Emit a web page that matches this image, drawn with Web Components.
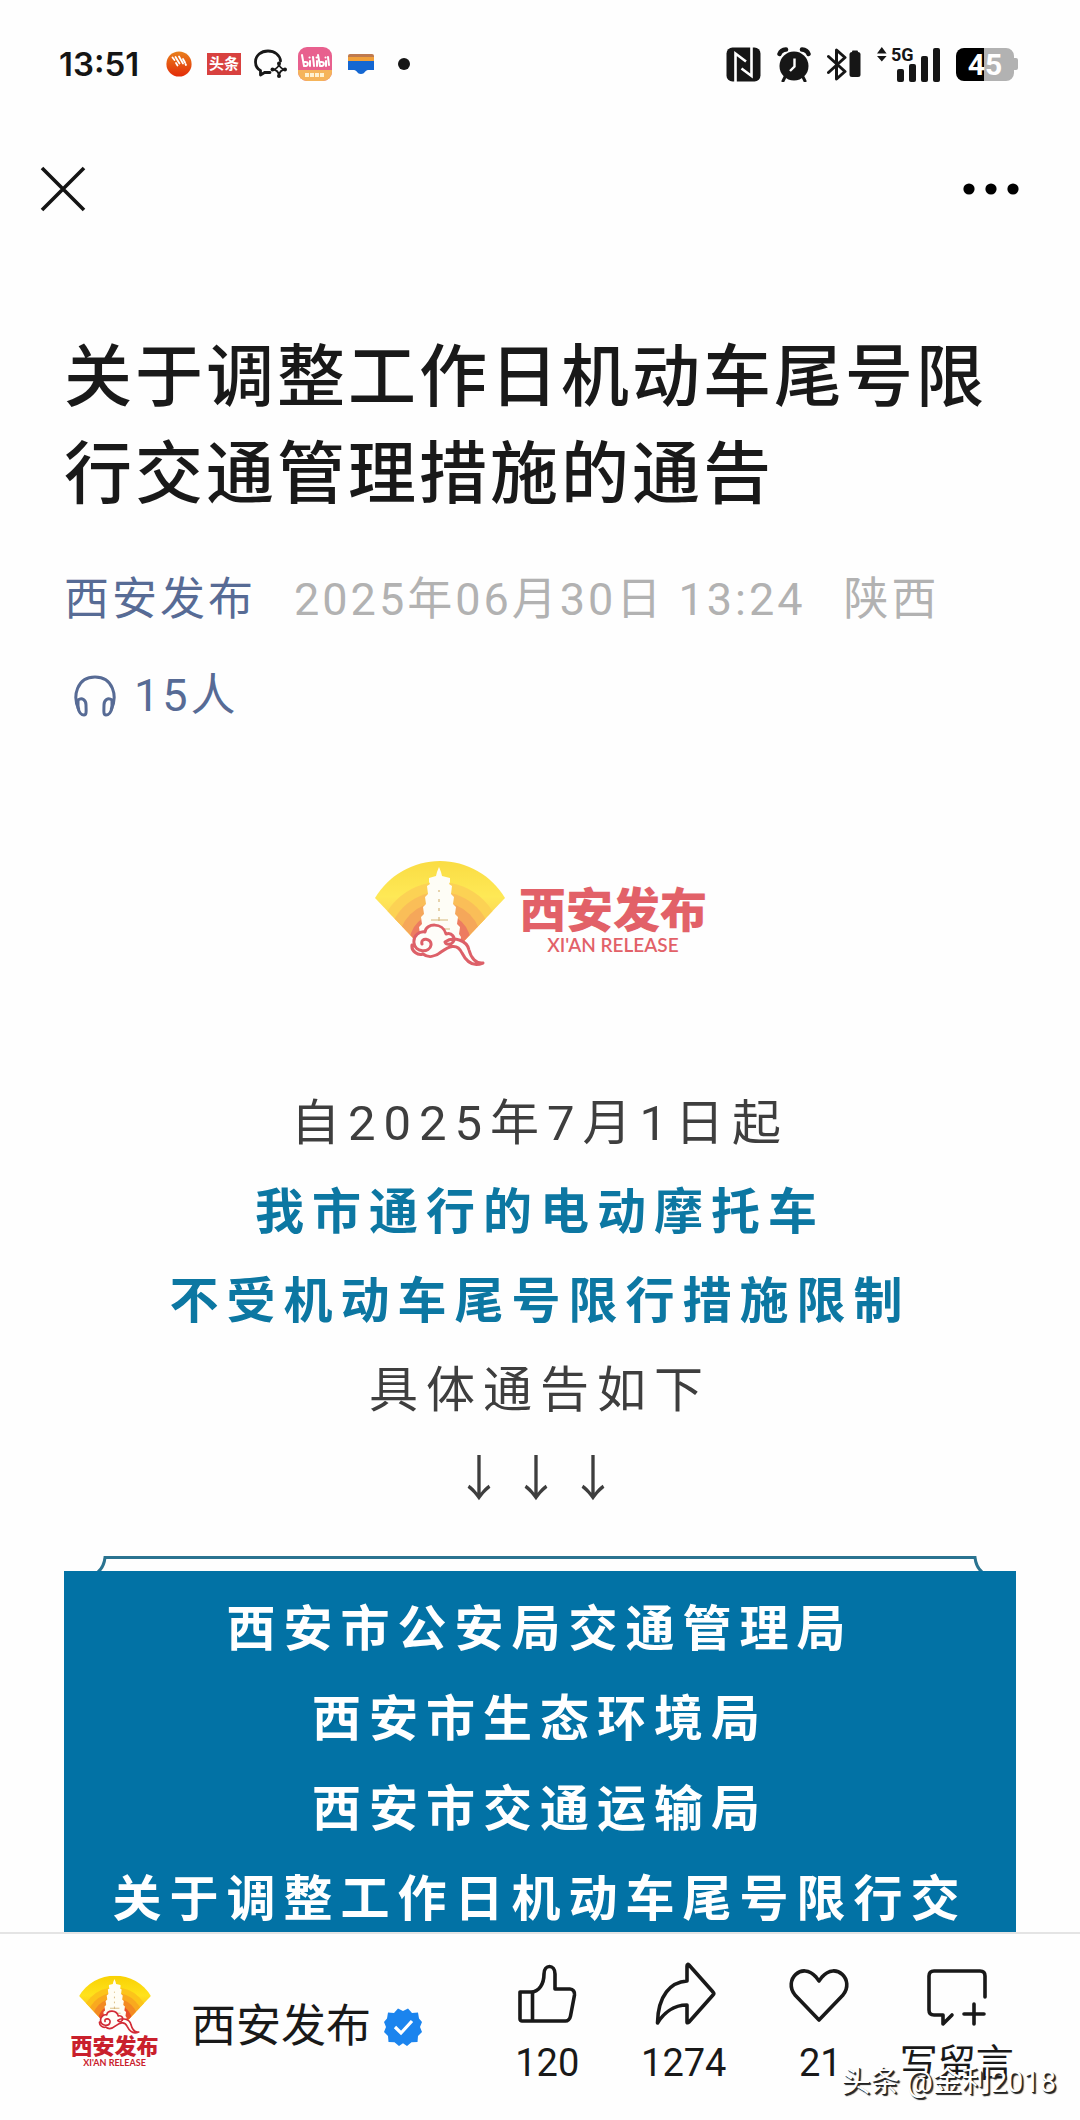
<!DOCTYPE html>
<html lang="zh-CN">
<head>
<meta charset="utf-8">
<meta name="viewport" content="width=device-width">
<title>关于调整工作日机动车尾号限行交通管理措施的通告</title>
<style>
body{margin:0;background:#fefefe;color:#191919;font-family:Roboto,"Noto Sans CJK SC",sans-serif}
</style>
</head>
<body>
<article-page></article-page>
<script>
function define(name, html){
  const t = document.createElement('template');
  t.innerHTML = html;
  customElements.define(name, class extends HTMLElement{
    constructor(){ super(); this.attachShadow({mode:'open'}).appendChild(t.content.cloneNode(true)); }
  });
}

define('status-bar', `
<style>
:host{display:flex;align-items:center;justify-content:space-between;height:128px;padding:0 62px 0 59px;box-sizing:border-box}
.side{display:flex;align-items:center}
.time{font:600 33px/40px Inter,sans-serif;color:#151515;width:107px;white-space:nowrap}
svg{display:block;flex:none}
.tt{background:#d8413f;color:#fff;font-size:15px;line-height:22px;width:34px;text-align:center;font-weight:700;margin:0 12px 0 15px}
.bili{margin:0 16px 0 11px}
.dot{width:12px;height:12px;border-radius:50%;background:#151515;margin-left:24px}
.right{gap:16px}
.bat{position:relative;width:62px;height:33px;font:700 30px/33px Roboto,sans-serif;color:#fff;text-align:center}
.bat svg{position:absolute;left:0;top:0}
.bat span{position:relative;display:block;width:58px}
</style>
<div class="side">
 <span class="time">13:51</span>
 <svg width="26" height="26" viewBox="0 0 26 26"><defs><linearGradient id="o" x1="0" y1="0" x2="0" y2="1"><stop offset="0" stop-color="#e8801c"/><stop offset="1" stop-color="#e32b08"/></linearGradient></defs><circle cx="13" cy="13" r="12.6" fill="url(#o)"/><g stroke="#fff" stroke-width="1.8" stroke-linecap="round"><path d="M6.500 6.500l2 2.500M9.500 6l4 6.500M13 5.500l4 7M10 12l1.500 2.500M17 8l2 3.500M19.500 13l.5 1"/></g></svg>
 <span class="tt">头条</span>
 <svg width="34" height="30" viewBox="0 0 34 30" fill="none" stroke="#181818" stroke-width="2.8" stroke-linecap="round" stroke-linejoin="round"><path d="M27.500 12C27 6 21.500 2 15 2 8 2 2.500 6.500 2.500 13c0 4 2 7 5 8.500V26l4.500-2.700 5 .2"/><path d="M26 14.500c.5 4 2 5.500 6 6-4 .5-5.500 2-6 6-.5-4-2-5.500-6-6 4-.5 5.500-2 6-6z" stroke-width="1.800"/><g fill="#181818" stroke="none"><circle cx="26" cy="14.500" r="2"/><circle cx="26" cy="27" r="2"/><circle cx="19.500" cy="20.500" r="2"/><circle cx="32" cy="20.500" r="2"/></g></svg>
 <svg class="bili" width="34" height="34" viewBox="0 0 34 34"><rect width="34" height="34" rx="9" fill="#e8608e"/><path d="M0 23h34v2a9 9 0 0 1-9 9H9a9 9 0 0 1-9-9z" fill="#f5b45a"/><path d="M7 28h20" stroke="#fff1cf" stroke-width="4" stroke-dasharray="4 1"/><g fill="none" stroke="#fff" stroke-width="2" stroke-linecap="round"><path d="M4 8l2 11c5 1 5-5 .8-4M12 14v5M15 10l1 9M19 14v5M20 8l2 11c5 1 5-5 .8-4M28 14v5M30 10l1 8M11.500 10.500h.1M18.500 10.500h.1M27.500 10.500h.1"/></g></svg>
 <svg width="26" height="22" viewBox="0 0 26 22"><rect y="1" width="26" height="9" rx="2" fill="#bf7a4e"/><rect y="4" width="26" height="5" fill="#f0a03a"/><path d="M0 8h26v9h-6c-3 0-3 4-7 4s-4-4-7-4H0z" fill="#1467d2"/></svg>
 <span class="dot"></span>
</div>
<div class="side right">
 <svg width="35" height="35" viewBox="0 0 35 35"><rect x=".5" y=".5" width="34" height="34" rx="6" fill="#161616"/><path d="M9.500 35V6.500L20 14.500M15.500 21.500l10 7.500V0" fill="none" stroke="#fff" stroke-width="2.600"/></svg>
 <svg width="34" height="35" viewBox="0 0 34 35"><circle cx="17" cy="19" r="14.500" fill="#161616"/><g fill="none" stroke="#161616" stroke-width="4.500" stroke-linecap="round"><path d="M2.500 7Q4 3 9 2.500M31.500 7Q30 3 25 2.500" /><path d="M8 30l-2 4M26 30l2 4" stroke-width="3"/></g><path d="M17.500 11.500v8l-4.500 4.500" fill="none" stroke="#fff" stroke-width="2.400"/></svg>
 <svg width="34" height="35" viewBox="0 0 34 35"><path d="M1.500 9.500l16.500 15L9.500 32V3L18 10.500 1.500 25.500" fill="none" stroke="#161616" stroke-width="3" stroke-linejoin="round" stroke-linecap="round"/><rect x="22.500" y="5" width="11" height="25" rx="2.500" fill="#161616"/><rect x="25" y="3.500" width="6" height="4" rx="1" fill="#161616"/></svg>
 <svg width="63" height="51" viewBox="0 -8 63 51" fill="#161616"><path d="M0 6.500L4.800 0l4.800 6.500zM0 9h9.600L4.800 14.500z"/><text x="14" y="14" font-family="Roboto" font-weight="700" font-size="18">5G</text><rect x="20" y="22" width="7" height="13" rx="2"/><rect x="32" y="17" width="7" height="18" rx="2"/><rect x="44" y="9" width="7" height="26" rx="2"/><rect x="56" y="1" width="7" height="34" rx="2"/></svg>
 <div class="bat"><svg width="62" height="33" viewBox="0 0 62 33"><path d="M8 0h20v33H8a8 8 0 0 1-8-8V8a8 8 0 0 1 8-8z" fill="#000"/><path d="M28 0h22a8 8 0 0 1 8 8v2h2q2 0 2 2v8q0 2-2 2h-2v3a8 8 0 0 1-8 8H28z" fill="#b2b2b2"/></svg><span>45</span></div>
</div>`);

define('nav-bar', `
<style>
:host{display:flex;align-items:center;justify-content:space-between;height:122px;padding:0 60px 0 40px;box-sizing:border-box}
button{border:0;background:none;padding:0;margin:0;display:block}
svg{display:block}
</style>
<button aria-label="关闭"><svg width="46" height="46" viewBox="0 0 46 46" stroke="#141414" stroke-width="3.600"><path d="M2 2l42 42M44 2L2 44"/></svg></button>
<button aria-label="更多"><svg width="58" height="12" viewBox="0 0 58 12"><circle cx="7" cy="6" r="5.600"/><circle cx="29" cy="6" r="5.600"/><circle cx="51" cy="6" r="5.600"/></svg></button>`);

define('pagoda-fan', `
<style>:host{display:block}svg{display:block;width:100%;height:auto}</style>
<svg viewBox="4 2 134 112">
<defs><clipPath id="f"><path d="M6 42A75.600 75.600 0 0 1 136 42L95 85H47z"/></clipPath>
<linearGradient id="y" x1="0" y1="0" x2="0" y2="1"><stop offset="0" stop-color="#f8cf00"/><stop offset=".45" stop-color="#ffe21c"/><stop offset="1" stop-color="#f5a623"/></linearGradient></defs>
<g clip-path="url(#f)"><rect width="142" height="90" fill="url(#y)"/><circle cx="71" cy="88" r="62" fill="#fcc41a"/><circle cx="71" cy="88" r="52" fill="#f9a91f"/><circle cx="71" cy="88" r="42" fill="#f38a22"/><circle cx="71" cy="88" r="31" fill="#e8502a"/><circle cx="71" cy="88" r="21" fill="#d92b30"/></g>
<path d="M70 11l2 5 1 4 8 2v4l-1 2 3 2-1 8 3 3-1 7 3 3-1 7 3 3-1 7 3 3-1 7 2 3-1 5 2 4H48l2-4-1-5 2-3-1-7 3-3-1-7 3-3-1-7 3-3-1-7 3-3-1-8 3-2-1-2v-4l7-2 1-4z" fill="#fffdf4"/>
<path d="M70 34v2M70 43v3M70 52v3M70 61v4M62 64h17M60 73h21" stroke="#c8a04e" stroke-width="1.200"/>
<path d="M53 88c-2-7 10-6 9 1-1 8-16 8-17-2-1-8 6-12 11-11 1-9 18-10 21 2 6-2 10 4 7 8-2 3-7 3-8 0 8-6 22-2 24 8 2 8 7 14 14 13-12 5-18-4-21-10-5-11-14-6-21-1-6 5-13 6-18 2-5 2-12-3-11-9" fill="#fffdf8" stroke="#d22a35" stroke-width="3" stroke-linejoin="round" stroke-linecap="round"/>
</svg>`);

define('release-logo', `
<style>
:host{display:flex;align-items:center;justify-content:center;gap:12px;height:116px;opacity:.74;color:#d92b35}
pagoda-fan{width:134px}
.words{display:flex;flex-direction:column;align-items:center;padding-top:14px}
.cn{font-size:47px;line-height:48px;font-weight:900}
.en{font:600 19px/20px Lato,sans-serif}
</style>
<pagoda-fan></pagoda-fan><div class="words"><span class="cn">西安发布</span><span class="en">XI'AN RELEASE</span></div>`);

define('meta-row', `
<style>
:host{display:block;margin-top:28px;font-size:45px;line-height:96px;letter-spacing:3px;color:#b2b2b2}
a{color:#576b95;text-decoration:none}
.row{display:flex;gap:38px;white-space:nowrap}
.listen{display:flex;align-items:center;gap:17px;padding-left:9px;color:#576b95}
svg{display:block}
</style>
<div class="row"><a href="#account">西安发布</a><span>2025年06月30日 13:24</span><span>陕西</span></div>
<div class="listen"><svg width="44" height="44" viewBox="0 0 44 44" fill="none" stroke="#576b95" stroke-width="3"><path d="M6 36C-1 22 4 3 22 3s23 19 16 33"/><path d="M5 26c4-3 8 0 8 5s1 10-2 10-5-3-6-7zM39 26c-4-3-8 0-8 5s-1 10 2 10 5-3 6-7z"/></svg><span>15人</span></div>`);

define('notice-text', `
<style>
:host{display:block;text-align:center;font-size:49px;line-height:89px;letter-spacing:8px;color:#3e3e3e}
::slotted(p){margin:0}
::slotted(.key){color:#0c77a2;font-weight:700}
</style><slot></slot>`);

define('notice-banner', `
<style>
:host{display:block;margin-top:32px}
svg{display:block}
.rim{display:flex;padding:0 30px}
.line{flex:1;border-top:3px solid #2a7390}
.box{background:#0272a5;color:#fff;padding:14px 28px 40px;font-weight:700;font-size:49px;line-height:90px;letter-spacing:8px;text-align:center}
::slotted(p){margin:0}
</style>
<div class="rim"><svg width="13" height="15" viewBox="0 0 13 15" fill="none" stroke="#2a7390" stroke-width="3"><path d="M13 1.500h-2Q10 11 4 16"/></svg><span class="line"></span><svg width="13" height="15" viewBox="0 0 13 15" fill="none" stroke="#2a7390" stroke-width="3"><path d="M0 1.500h2Q3 11 9 16"/></svg></div>
<div class="box"><slot></slot></div>`);

define('action-button', `
<style>
:host{display:block;flex:1}
button{width:100%;border:0;background:none;padding:0;font:inherit;color:inherit;display:flex;flex-direction:column;align-items:center;gap:12px;font-size:38px;line-height:50px;white-space:nowrap}
::slotted(svg){display:block;width:64px;height:64px;fill:none;stroke:#191919;stroke-width:3.600;stroke-linejoin:round;stroke-linecap:round}
</style>
<button><slot name="icon"></slot><slot></slot></button>`);

define('bottom-bar', `
<style>
:host{display:flex;position:relative;height:188px;box-sizing:border-box;border-top:2px solid #e4e4e4;background:#fefefe;padding:0 55px 0 70px}
.acct{display:flex;align-items:center;width:409px;flex:none;color:inherit;text-decoration:none;font-size:45px;line-height:60px;white-space:nowrap}
.av{width:89px;display:flex;flex-direction:column;align-items:center;color:#c9202c;margin-right:32px;padding-bottom:12px}
.av pagoda-fan{width:74px}
.av b{font-size:22px;line-height:22px;font-weight:900}
.av small{font:700 9px/10px Lato,sans-serif}
.acct svg{margin-left:13px;display:block}
.acts{display:flex;flex:1;padding-top:28px}
.mark{position:absolute;right:24px;bottom:18px;font-size:29px;line-height:40px;color:#fff;text-shadow:1px 1px 0 #222,2px 2px 1px #222;white-space:nowrap}
</style>
<a class="acct" href="#account"><span class="av"><pagoda-fan></pagoda-fan><b>西安发布</b><small>XI'AN RELEASE</small></span><span>西安发布</span>
<svg width="38" height="38" viewBox="-19 -19 38 38"><path d="M0-16l5-2.500 4 4.500 6-.5 1 6L19-5 17 0l2 5-4 4-.5 6-6 .3L4 19 0 16.300-4 19l-4.500-3.700-6-.3L-15 9l-4-4L-17 0l-2-5 3-3.500 1-6 6 .5 4-4.500z" fill="#1b84ee"/><path d="M-8 0l6 6L9-6" fill="none" stroke="#fff" stroke-width="3.200"/></svg></a>
<div class="acts">
<action-button><svg slot="icon" viewBox="0 0 64 64"><path d="M5 33h11c8 0 13-8 13-18 0-10 11-10 11 0v15h15c3 0 5 3 4.500 6l-4 21c-.5 3-3 5-5 5H7c-1 0-2-1-2-2zM17.500 33v29" transform="translate(0 -3)"/></svg>120</action-button>
<action-button><svg slot="icon" viewBox="0 0 64 64"><path d="M34 7v15C18 23 5 36 4.500 64C10 55 20 46 34 46v17c0 1 1 1 2 0l24-27c1-1 1-2 0-3L36 6c-1-1-2-1-2 1z" transform="translate(1 -3)"/></svg>1274</action-button>
<action-button><svg slot="icon" viewBox="0 0 64 64"><path d="M31 58L7 33C-5 18 14-1 28 15l3 4 3-4C48-1 67 18 55 33z"/></svg>21</action-button>
<action-button><svg slot="icon" viewBox="0 0 64 64"><path d="M60 37V16q0-5-5-5H9q-5 0-5 5v34q0 5 5 5h9v9l9-9" transform="translate(0 -2)"/><path d="M49 42v20M39 52h20"/></svg>写留言</action-button>
</div>
<span class="mark">头条 @金利2018</span>`);

define('article-page', `
<style>
:host{display:flex;flex-direction:column;height:100vh}
status-bar,nav-bar,bottom-bar{flex:none}
main{flex:1;min-height:0;overflow:hidden;padding:80px 64px 0}
h1{margin:0;font-size:68px;line-height:97px;font-weight:500;letter-spacing:3px}
release-logo{margin:112px 0 107px}
</style>
<status-bar></status-bar>
<nav-bar></nav-bar>
<main>
<h1>关于调整工作日机动车尾号限行交通管理措施的通告</h1>
<meta-row></meta-row>
<release-logo></release-logo>
<notice-text><p>自2025年7月1日起</p><p class="key">我市通行的电动摩托车</p><p class="key">不受机动车尾号限行措施限制</p><p>具体通告如下</p><p>↓↓↓</p></notice-text>
<notice-banner><p>西安市公安局交通管理局</p><p>西安市生态环境局</p><p>西安市交通运输局</p><p>关于调整工作日机动车尾号限行交</p></notice-banner>
</main>
<bottom-bar></bottom-bar>`);
</script>
</body>
</html>
